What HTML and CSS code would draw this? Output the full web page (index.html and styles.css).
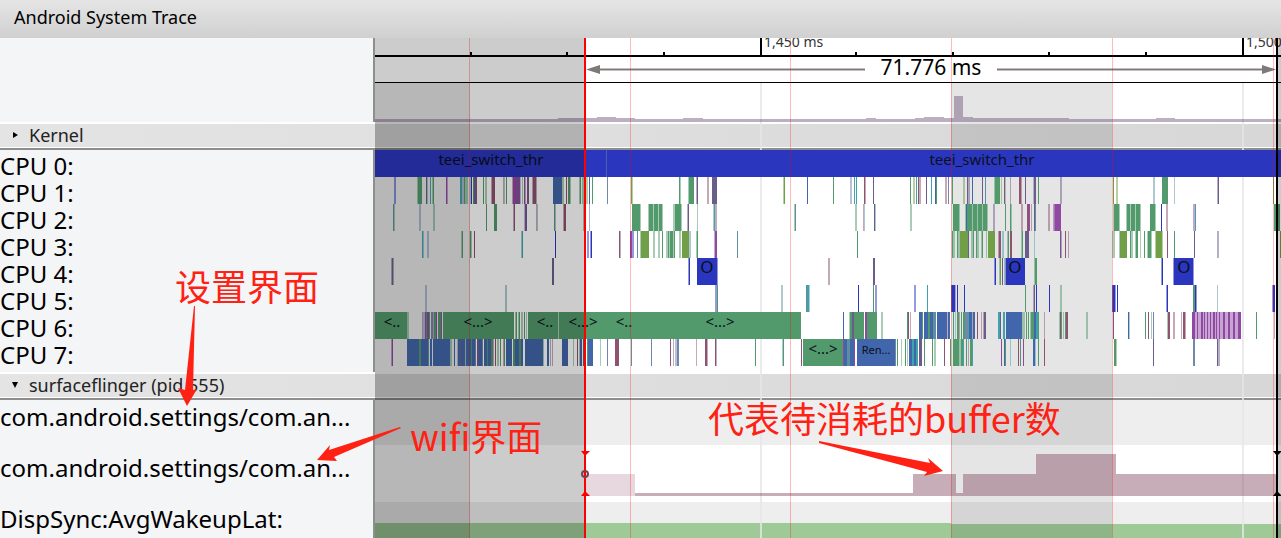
FILE: index.html
```html
<!DOCTYPE html>
<html lang="zh">
<head>
<meta charset="utf-8">
<title>Android System Trace</title>
<link rel="stylesheet" href="styles.css">
</head>
<body>
<div class="app">
  <header class="titlebar"><h1 class="title">Android System Trace</h1></header>
  <main class="trace">
    <section class="row row-ruler">
      <div class="label"></div>
      <svg class="track raised" aria-label="Timeline">
        <g transform="translate(-375 0)">
          <g class="ticks">
            <rect x="470" y="14" width="2" height="3"/><rect x="566" y="14" width="2" height="3"/><rect x="663" y="14" width="2" height="3"/>
            <rect x="760" y="0" width="2" height="17"/><rect x="855" y="14" width="2" height="3"/><rect x="952" y="14" width="2" height="3"/>
            <rect x="1048" y="14" width="2" height="3"/><rect x="1145" y="14" width="2" height="3"/><rect x="1242" y="0" width="2" height="17"/>
            <rect x="375" y="17" width="4000" height="2"/><rect x="375" y="44" width="4000" height="1"/>
          </g>
          <text class="tick-text" x="764" y="9">1,450 ms</text>
          <text class="tick-text" x="1246" y="9">1,500 ms</text>
          <g class="span-glow"><rect x="598" y="30" width="267" height="3"/><rect x="997" y="30" width="267" height="3"/></g>
          <g class="span-line"><rect x="598" y="31" width="267" height="1"/><rect x="997" y="31" width="267" height="1"/>
            <path d="M586 31.5L600 27V36Z"/><path d="M1276 31.5L1262 27V36Z"/></g>
          <text class="span-text" x="931" y="37">71.776 ms</text>
          <path class="usage" d="M375 84V81H558V80H597V79H616V80H635V81H683V80H703V81H866V80H876V81H915V80H924V79H944V80H954V58H963V79H973V80H1069V81H1156V80H1175V81H4000V84Z"/>
        </g>
      </svg>
    </section>

    <button class="group" type="button"><svg class="caret" viewBox="0 0 8 8"><path d="M2 1L7 4L2 7Z"/></svg><span>Kernel</span></button>
    <div class="cpus" id="cpus"></div>

    <button class="group" type="button"><svg class="caret" viewBox="0 0 8 8"><path d="M1 1H7L4 7Z"/></svg><span>surfaceflinger (pid 555)</span></button>
    <section class="row row-counter">
      <div class="label">com.android.settings/com.an...</div>
      <div class="track"><div class="fill shaded"></div></div>
    </section>
    <section class="row row-counter">
      <div class="label">com.android.settings/com.an...</div>
      <svg class="track raised" aria-label="Buffers">
        <g transform="translate(-375 0)">
          <rect class="buffer-soft" x="586" y="23" width="49" height="22"/>
          <path class="buffer" d="M635 45V42H913V23H956V42H963V23H1036V3H1116V23H1277V45Z"/>
        </g>
      </svg>
    </section>
    <section class="row row-counter">
      <div class="label">DispSync:AvgWakeupLat:</div>
      <svg class="track shaded" aria-label="Average wakeup latency">
        <path class="latency" d="M0 60V21H576V22H4000V60Z"/>
      </svg>
    </section>

    <svg class="layer layer-bands" aria-hidden="true">
      <g transform="translate(-375 0)">
        <rect class="band" x="375" y="45" width="95" height="900"/>
        <rect class="band" x="951" y="45" width="161" height="900"/>
        <rect class="grid" x="760" y="45" width="2" height="900"/>
        <rect class="grid" x="1242" y="45" width="2" height="900"/>
      </g>
    </svg>
    <svg class="layer layer-marks" aria-hidden="true">
      <g transform="translate(-375 0)">
        <g class="vsync">
          <rect x="469" width="1" height="900"/><rect x="630" width="1" height="900"/><rect x="790" width="1" height="900"/>
          <rect x="951" width="1" height="900"/><rect x="1112" width="1" height="900"/><rect x="1273" width="1" height="900"/>
        </g>
        <rect class="dim" x="375" width="209" height="900"/>
        <rect class="dim" x="1278" width="3000" height="900"/>
        <rect class="start" x="584" width="2" height="900"/>
        <circle class="handle" cx="585" cy="436" r="3"/>
        <path class="start" d="M581 413H590L585 418Z"/><path class="start" d="M581 458H590L585 453Z"/>
        <rect x="1276" width="2" height="900"/>
        <path d="M1273 413H1282L1277 418Z"/><path d="M1273 458H1282L1277 453Z"/>
      </g>
    </svg>
    <svg class="layer layer-notes">
      <path d="M194 268H195L193 352L197 351L187 368L178 350L185 352Z"/>
      <path d="M400 389L401 390L334 419L337 423L317 422L330 407L329 412Z"/>
      <path d="M819 403L930 425L928 420L943 433L924 438L927 434L819 405Z"/>
      <text x="175" y="263">设置界面</text>
      <text x="410" y="413">wifi界面</text>
      <text x="708" y="395">代表待消耗的buffer数</text>
    </svg>
  </main>
</div>
<script src="trace.js"></script>
</body>
</html>
```
FILE: styles.css
```css
* { box-sizing: border-box; }
body { margin: 0; background: #fff; color: #000; font-family: "Noto Sans", "Noto Sans CJK SC", sans-serif; }
.app { display: flex; flex-direction: column; height: 100vh; overflow: hidden; }
.titlebar { flex: none; height: 38px; padding: 0 14px; display: flex; align-items: center; background: linear-gradient(#e5e5e5, #d0d0d0); }
.title { margin: 0; padding-bottom: 4px; font-size: 18px; font-weight: 400; line-height: 24px; }
.trace { position: relative; flex: 1; min-height: 0; overflow: hidden; }
.row { display: grid; grid-template-columns: 375px minmax(0, 1fr); }
.label { background: #f4f5f7; border-right: 2px solid #8e8e8e; font-size: 24px; line-height: 33px; white-space: nowrap; }
.track { display: block; width: 100%; height: 100%; overflow: hidden; }
.raised { position: relative; z-index: 2; }
.row-ruler { height: 84px; }
.ticks { fill: #000; }
.tick-text { font-size: 14px; fill: #333; }
.span-text { font-size: 21px; text-anchor: middle; }
.span-glow { fill: #c4bfbc; }
.span-line { fill: #7e7878; }
.usage { fill: rgba(108, 77, 119, 0.45); }

.group { display: flex; align-items: center; gap: 10px; width: 100%; height: 28px; padding: 0 11px 4px; border: 0; border-top: 2px solid #fff; background: linear-gradient(90deg, #e4e4e4, #d7d7d7); color: #222; font-family: inherit; font-size: 18px; line-height: 22px; text-align: left; box-shadow: inset 0 -2px #8e8e8e, inset 0 -3px #fff; }
.caret { width: 8px; height: 8px; fill: #000; }

.cpus { display: flex; flex-direction: column; }
.row-cpu { height: 27px; }
.row-cpu:last-child { height: 33px; }
.row-cpu .label { line-height: 32px; }
.slice-text { fill: #0a1020; font-size: 15px; text-anchor: middle; }
.slice-small { font-size: 11px; }
.slice-big { font-size: 17px; }

.row-counter { height: 51px; }
.row-counter .fill { height: 45px; }
.shaded { background: #eee; }
.buffer { fill: rgba(130, 73, 97, 0.45); }
.buffer-soft { fill: #e7d7df; }
.latency { fill: #9eca98; }

.layer { position: absolute; top: 0; left: 375px; width: calc(100% - 375px); height: 100%; pointer-events: none; }
.layer-bands { z-index: 1; }
.layer-marks { z-index: 3; }
.layer-notes { z-index: 4; left: 0; width: 100%; fill: #ff2113; font-family: "Noto Sans CJK SC", sans-serif; font-size: 36px; }
.band { fill: rgba(0, 0, 0, 0.1); }
.grid { fill: rgba(230, 230, 230, 0.8); }
.vsync { fill: rgba(255, 0, 0, 0.27); }
.dim { fill: rgba(0, 0, 0, 0.2); }
.start { fill: #f00; }
.handle { fill: none; stroke: #7a4050; stroke-width: 2; }
```
FILE: trace.js
```js
// Slices per CPU: colour key, start and width. Upper-case keys are the faded variants.
const COLORS = {
  g: '#52996b', b: '#4166ab', u: '#2b36bf', p: '#9049a3', m: '#8d5370',
  t: '#3fa3ab', o: '#709f47', v: '#6b5d8b', s: '#6f88ab', k: '#5f8f9f'
};

const CPUS = [
  'u375:4000 K606:1',

  'U394:2 G417:1 g418:4 v426:1 G427:1 t430:1 G432:1 g433:1 p446:1 P447:1 t460:2 S462:2 g464:1 G465:3 u471:1 S470:1 g473:1 v474:2 m476:1 g483:1 G485:2 M491:1 m492:3 M503:1 G504:1 g506:1 M512:1 p513:3 v516:1 p517:3 S520:1 G522:1 v524:1 M525:1 p527:1 v528:1 M532:1 m533:3 M536:1 b553:9 G562:2 m566:1 g568:2 G570:1 G579:1 g580:1 G582:2 O586:2 b589:1 g592:1 ' +
  's607:1 o631:1 O632:1 g679:1 G680:1 G688:1 g689:5 V696:1 v697:1 M707:2 v712:5 O783:1 o784:1 b807:1 g833:1 S850:2 t854:1 t856:1 m864:1 M865:1 v873:1 g910:1 O913:1 O914:1 t916:1 m918:1 M919:2 v926:1 t931:1 b935:1 g936:1 M945:2 s948:1 g952:1 O963:2 v967:1 V968:2 b972:1 v982:1 k985:1 G994:1 g995:5 O1001:1 m1004:1 T1005:1 V1010:1 m1019:2 M1021:1 v1025:1 S1033:1 v1034:2 g1038:1 V1060:2 o1113:1 O1116:2 K1153:2 g1162:6 K1174:1 V1217:1 v1218:1 o1273:1',

  'k393:1 G394:1 S419:2 G433:1 K434:1 g486:1 g494:3 M513:1 m514:1 S524:1 p525:1 v526:1 M536:1 K537:1 k554:1 G555:1 M563:1 m564:2 G583:1 t585:1 V589:1 ' +
  'g632:8 G640:1 G648:1 g649:4 G653:1 g654:4 G658:1 g659:3 G662:1 G673:2 g675:6 G681:1 V687:1 v688:1 G697:1 K713:1 t714:1 M715:2 G794:1 k795:1 G855:2 M863:1 K864:1 v874:1 K875:1 G910:2 g953:6 G959:1 G965:1 b966:1 g967:5 G972:1 g973:4 G977:1 g978:4 G982:1 g983:4 G987:1 V993:2 g1005:1 g1010:1 G1011:1 M1021:2 m1027:3 p1029:1 M1031:1 v1034:1 k1035:1 M1048:2 M1054:1 P1053:2 p1055:6 G1113:1 g1114:5 G1119:1 G1126:1 g1127:3 G1130:1 g1131:4 G1135:1 g1136:4 G1140:1 g1150:5 G1155:1 u1161:1 M1166:2 P1193:2 t1195:1 g1274:6',

  't422:1 T423:1 S427:2 G461:1 g462:1 g470:1 G471:1 m474:1 T521:1 t522:1 u555:1 U587:2 U590:1 u591:1 ' +
  'm619:1 V620:1 p630:2 U632:2 k637:1 G640:1 o641:8 G653:2 G658:2 g662:1 G666:2 g668:1 G669:1 g670:1 g671:2 G673:1 g674:1 G679:2 o682:7 K689:2 g697:1 G696:1 P714:1 p715:2 k737:1 g857:1 g952:1 G953:2 g957:1 G958:1 G959:1 o960:8 v968:1 G971:2 g973:1 g976:1 G977:2 G981:1 g982:1 G986:1 o988:7 M998:1 m999:2 T1002:2 g1008:1 G1007:1 m1010:2 G1021:1 g1022:1 v1025:4 T1034:1 v1060:1 P1061:1 m1065:1 M1068:1 G1112:3 G1119:1 o1120:7 g1130:1 G1131:2 G1135:1 g1136:2 G1140:1 g1144:1 G1147:1 g1148:3 G1151:1 O1155:1 o1156:6 O1162:1 m1167:1 g1174:1 v1194:1 V1217:2 o1280:2',

  'V391:1 v392:1 V393:1 v552:2 U688:1 u689:1 u697:20 U717:1 M828:2 v873:2 U994:1 u995:1 G999:1 o1000:1 v1002:1 G1004:1 U1005:1 u1006:19 G1034:1 g1035:2 U1161:1 u1162:1 U1173:1 u1174:19 U1193:1',

  'S425:2 K505:2 U715:2 g717:1 K781:2 k806:1 t807:2 K809:1 u858:1 g873:1 U875:2 U914:2 t927:1 v951:1 u952:3 V955:1 u957:1 u964:1 g1025:1 V1033:1 v1034:1 u1036:1 u1049:1 G1060:2 v1112:1 u1113:2 U1115:1 u1117:1 U1166:1 u1167:1 g1193:2 u1195:1 U1196:1 K1217:1 U1272:1 u1273:2',

  'g375:32 G407:2 V422:1 S423:2 p425:1 g426:1 p427:2 g429:1 s431:2 P433:1 g434:2 p436:1 g438:3 p441:1 g443:71 G515:1 g516:1 G518:1 g519:1 G521:2 g524:1 G526:1 g528:30 G558:1 g559:242 ' +
  'b843:1 G849:1 g850:2 v852:2 g854:10 p865:2 g867:10 G881:2 g907:1 m908:1 M910:1 b919:3 g922:1 b924:4 g928:2 b930:3 k933:3 b937:10 M947:1 b948:2 g953:1 T955:1 g957:2 M959:1 g961:1 g963:2 s965:3 t968:1 b969:3 M972:1 b973:2 m977:1 M981:1 M983:1 v984:2 t998:2 v1000:1 t1003:2 b1006:16 G1022:3 g1026:1 g1028:1 G1030:1 g1031:3 b1034:2 t1036:2 g1038:1 M1044:1 G1059:1 m1060:1 g1061:1 G1063:1 g1065:1 m1066:2 G1086:2 v1113:1 b1128:1 K1129:1 g1145:1 m1148:1 G1151:1 s1153:1 G1167:1 m1168:2 M1173:2 M1181:1 m1183:2 M1185:1 p1192:3 P1195:46 p1197:1 p1201:2 p1204:1 p1207:1 p1210:1 p1213:2 p1216:1 p1219:1 p1223:2 p1228:2 p1233:2 p1238:2 p1240:1 g1256:1 M1274:1',

  'P391:1 p392:1 b407:12 g419:2 b421:7 k428:1 b430:2 b433:17 G450:2 b454:1 S457:1 b458:2 v460:1 b461:4 G465:1 b466:5 g471:1 b472:3 s475:1 v477:2 b479:3 s482:1 b484:3 g487:1 b488:3 g491:2 M493:1 m495:1 G497:2 g500:1 M503:1 g504:1 b506:6 g513:2 b515:4 g519:2 b521:2 b525:18 G543:1 b547:2 V550:1 M552:1 b562:6 G573:1 m577:1 G579:1 b580:2 m583:1 g587:1 b588:5 ' +
  'G600:1 s607:1 m615:4 k631:1 s651:1 m670:1 M673:1 S675:2 s677:2 M696:1 m705:2 M707:1 m715:1 V716:1 g755:1 K782:1 g783:1 m801:1 g803:40 p843:1 b844:3 k847:3 b850:4 p854:1 b857:38 s895:1 g897:1 G901:1 g905:1 G907:1 b909:3 t912:2 b914:2 t916:2 v919:3 g924:1 g932:1 G934:2 m944:1 g950:1 g953:6 G959:2 g961:2 t963:1 g966:1 M968:1 g970:2 t972:1 p1001:1 b1004:1 g1005:1 T1010:1 m1018:1 g1020:1 p1023:1 b1033:2 T1035:1 g1038:1 m1044:1 g1114:1 g1115:1 G1116:1 v1153:1 s1193:2 v1217:1 V1218:2'
];

// Captions: CPU, centre, text, size class.
const CAPTIONS = [
  [0, 491, 'teei_switch_thr', ''], [0, 982, 'teei_switch_thr', ''],
  [4, 707, 'O', 'slice-big'], [4, 1015, 'O', 'slice-big'], [4, 1184, 'O', 'slice-big'],
  [6, 392, '<..', ''], [6, 478, '<...>', ''], [6, 545, '<..', ''],
  [6, 583, '<...>', ''], [6, 624, '<..', ''], [6, 720, '<...>', ''],
  [7, 823, '<...>', ''], [7, 876, 'Ren...', 'slice-small']
];

const slices = (data) => data.trim().split(/\s+/).map((item) => {
  const key = item[0];
  const [x, w] = item.slice(1).split(':');
  const faded = key !== key.toLowerCase() ? ' opacity="0.5"' : '';
  return `<rect x="${x}" width="${w}" height="27" fill="${COLORS[key.toLowerCase()]}"${faded}/>`;
}).join('');

const captions = (cpu) => CAPTIONS.filter((c) => c[0] === cpu).map(([, x, text, cls]) =>
  `<text class="slice-text ${cls}" x="${x}" y="15">${text.replace(/</g, '&lt;')}</text>`).join('');

document.getElementById('cpus').innerHTML = CPUS.map((data, i) =>
  `<section class="row row-cpu"><div class="label">CPU ${i}:</div>` +
  `<svg class="track raised"><g transform="translate(-375 0)">${slices(data)}${captions(i)}</g></svg></section>`).join('');
```
